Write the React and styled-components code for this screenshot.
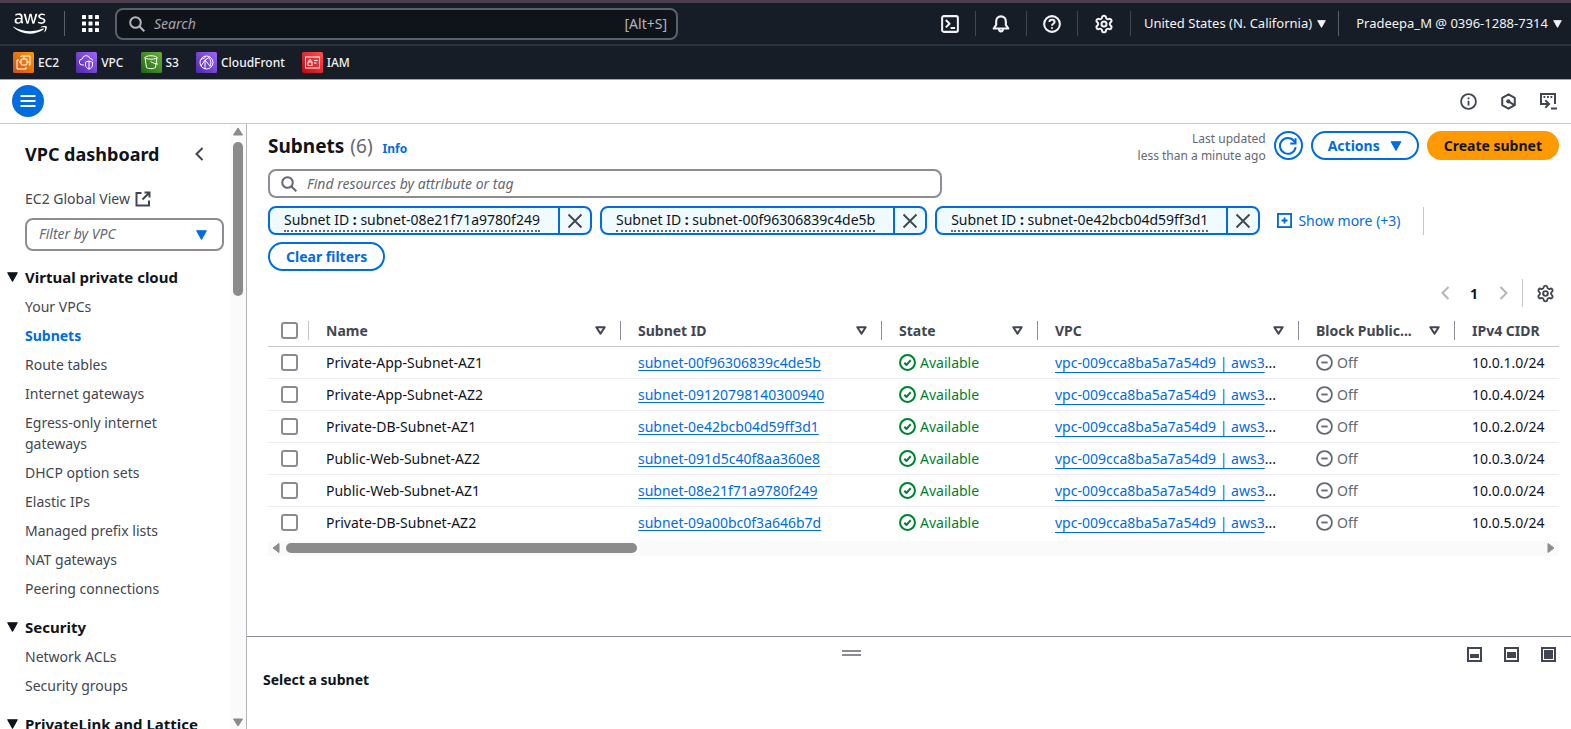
import React, { useState } from "react";
import styled, { createGlobalStyle } from "styled-components";
import { FaAws } from "react-icons/fa";
import { Settings } from "lucide-react";

const GlobalStyle = createGlobalStyle`
  *,
  *::before {
    box-sizing: border-box;
  }

  body {
    margin: 0;
    background: #fff;
    color: #0f141a;
    font-family: "Noto Sans", "Open Sans", sans-serif;
    font-size: 14px;
    line-height: 21px;
  }

  button,
  input,
  select {
    margin: 0;
    font: inherit;
    color: inherit;
  }

  svg {
    display: block;
    flex: none;
  }
`;

const Page = styled.div`
  display: flex;
  flex-direction: column;
  height: 100vh;
  overflow: hidden;
`;

/* ---------- top navigation ---------- */

const Nav = styled.header`
  flex: none;
  background: #161d26;
  border-top: 3px solid #4b3f4e;
  border-bottom: 1px solid #a4a8b3;
  color: #f3f3f7;
`;

const NavRow = styled.div`
  display: flex;
  align-items: center;
  height: 43px;
  padding: 0 0 0 13px;
  border-bottom: 2px solid #2c323d;
`;

const Logo = styled.a`
  display: flex;
  padding-right: 17px;
  color: #fff;

  svg {
    width: 34px;
    height: 27px;
  }
`;

const Divider = styled.span`
  width: 1px;
  height: ${(p) => p.$h || 25}px;
  margin-right: ${(p) => p.$gap || 0}px;
  background: ${(p) => p.$color || "#424650"};
  flex: none;
`;

const IconButton = styled.button`
  display: flex;
  align-items: center;
  justify-content: center;
  width: ${(p) => p.$w || 50}px;
  padding: 0;
  border: 0;
  background: none;
  cursor: pointer;
`;

const NavSearch = styled.label`
  display: flex;
  align-items: center;
  flex: 0 1 563px;
  height: 32px;
  padding: 0 9px 0 12px;
  gap: 9px;
  border: 2px solid #5c606a;
  border-radius: 8px;
  background: #0f141a;
  color: #b4b4bb;

  input {
    flex: 1;
    min-width: 0;
    padding: 0;
    border: 0;
    outline: 0;
    background: none;
  }

  input::placeholder {
    color: #a4a4ad;
    font-style: italic;
  }
`;

const NavRight = styled.div`
  display: flex;
  align-items: center;
  margin-left: auto;
`;

const NavMenu = styled.button`
  display: flex;
  align-items: center;
  gap: 5px;
  padding: 0 ${(p) => p.$end}px 0 ${(p) => p.$start}px;
  border: 0;
  background: none;
  font-size: 13px;
  white-space: nowrap;
  cursor: pointer;
`;

const Favorites = styled.nav`
  display: flex;
  align-items: center;
  gap: 17px;
  height: 33px;
  padding: 0 13px;
`;

const Favorite = styled.a`
  display: flex;
  align-items: center;
  gap: 4px;
  color: #f3f3f7;
  font-size: 12px;
  font-weight: 500;
  text-decoration: none;
`;

/* ---------- toolbar ---------- */

const Toolbar = styled.div`
  display: flex;
  align-items: center;
  justify-content: space-between;
  flex: none;
  height: 44px;
  padding: 0 3px 1px 12px;
  border-bottom: 1px solid #c6c6cd;
  color: #424650;
`;

const MenuToggle = styled.button`
  display: flex;
  align-items: center;
  justify-content: center;
  width: 32px;
  height: 32px;
  border: 0;
  border-radius: 50%;
  background: #006ce0;
  color: #fff;
  cursor: pointer;
`;

const ToolIcons = styled.div`
  display: flex;
`;

const Body = styled.div`
  display: flex;
  flex: 1;
  min-height: 0;
`;

/* ---------- sidebar ---------- */

const Sidebar = styled.aside`
  display: flex;
  flex: none;
  width: 247px;
  border-right: 1px solid #b4b4bb;
`;

const SideContent = styled.div`
  flex: 1;
  min-width: 0;
  overflow: hidden;
  padding: 17px 6px 0 7px;
`;

const SideHeader = styled.div`
  display: flex;
  align-items: center;
  justify-content: space-between;
  padding: 0 18px;
  margin-bottom: 21px;
`;

const SideTitle = styled.h2`
  margin: 0;
  font-size: 18px;
  line-height: 26px;
`;

const SideTop = styled.div`
  display: flex;
  flex-direction: column;
  gap: 9px;
  padding-left: 18px;
  margin-bottom: 15px;
`;

const SideLink = styled.a`
  display: flex;
  align-items: center;
  gap: 5px;
  color: ${(p) => (p.$active ? "#006ce0" : "#424650")};
  font-weight: ${(p) => (p.$active ? 700 : 400)};
  text-decoration: none;
`;

const SelectBox = styled.div`
  position: relative;

  select {
    appearance: none;
    width: 100%;
    height: 33px;
    padding: 0 12px 2px;
    border: 2px solid #8c8c94;
    border-radius: 8px;
    background: #fff;
    color: #656871;
    font-style: italic;
  }

  svg {
    position: absolute;
    right: 17px;
    top: 12px;
    color: #006ce0;
    pointer-events: none;
  }
`;

const Section = styled.section`
  margin-bottom: 17px;
`;

const SectionButton = styled.button`
  display: flex;
  align-items: center;
  gap: 7px;
  padding: 0;
  border: 0;
  background: none;
  font-size: 15px;
  font-weight: 700;
  line-height: 22px;
  white-space: nowrap;
  cursor: pointer;
`;

const LinkList = styled.ul`
  display: flex;
  flex-direction: column;
  gap: 8px;
  margin: 8px 0 0;
  padding: 0 40px 0 18px;
  list-style: none;
`;

const Scrollbar = styled.div`
  display: flex;
  flex: none;
  flex-direction: ${(p) => (p.$horizontal ? "row" : "column")};
  align-items: center;
  justify-content: space-between;
  gap: 6px;
  padding: ${(p) => (p.$horizontal ? "0 4px" : "3px 0 2px")};
  ${(p) => (p.$horizontal ? "height: 15px" : "width: 16px")};
  background: #fafafa;
  color: #8b8b8b;
`;

const Track = styled.div`
  flex: 1;
  display: flex;
  flex-direction: ${(p) => (p.$horizontal ? "row" : "column")};
`;

const Thumb = styled.div`
  width: ${(p) => p.$w};
  height: ${(p) => p.$h};
  border-radius: 5px;
  background: #8b8b8b;
`;

/* ---------- main ---------- */

const Main = styled.main`
  display: flex;
  flex: 1;
  flex-direction: column;
  min-width: 0;
`;

const Content = styled.div`
  flex: 1;
  min-height: 0;
  overflow: hidden;
  padding: 7px 12px 0 21px;
`;

const TitleRow = styled.div`
  display: flex;
  align-items: center;
  justify-content: space-between;
  height: 29px;
  margin-bottom: 9px;
`;

const Title = styled.h1`
  display: flex;
  align-items: baseline;
  gap: 6px;
  margin: 0;
  padding-top: 3px;
  font-size: 19px;
  line-height: 28px;

  span {
    color: #656871;
    font-weight: 400;
  }

  a {
    margin-left: 4px;
    color: #006ce0;
    font-size: 12px;
    text-decoration: none;
  }
`;

const Actions = styled.div`
  display: flex;
  align-items: center;
  gap: 8px;
`;

const Updated = styled.p`
  margin: 0;
  padding-top: 3px;
  color: #656871;
  font-size: 12px;
  line-height: 17px;
  text-align: right;
`;

const Button = styled.button`
  display: inline-flex;
  align-items: center;
  justify-content: center;
  gap: 10px;
  height: 29px;
  padding: 0 ${(p) => p.$pad ?? 15}px;
  ${(p) => p.$round && "width: 29px;"}
  border: 2px solid ${(p) => (p.$primary ? "#ff9900" : "#006ce0")};
  border-radius: 15px;
  background: ${(p) => (p.$primary ? "#ff9900" : "#fff")};
  color: ${(p) => (p.$primary ? "#0f141a" : "#006ce0")};
  font-weight: 700;
  cursor: pointer;
`;

const FilterInput = styled.label`
  display: flex;
  align-items: center;
  gap: 10px;
  width: 674px;
  max-width: 100%;
  height: 29px;
  padding: 0 11px;
  margin-bottom: 8px;
  border: 2px solid #8c8c94;
  border-radius: 8px;
  color: #656871;

  input {
    flex: 1;
    padding: 0;
    border: 0;
    outline: 0;
    background: none;
  }

  input::placeholder {
    color: #656871;
    font-style: italic;
  }
`;

const Tokens = styled.div`
  display: flex;
  align-items: center;
  gap: 8px;
  margin-bottom: 7px;
`;

const Token = styled.div`
  display: flex;
  height: 29px;
  border: 2px solid #006ce0;
  border-radius: 8px;
  background: #f0fbff;
  overflow: hidden;

  button {
    display: flex;
    align-items: center;
    border: 0;
    background: none;
    cursor: pointer;
  }
`;

const TokenLabel = styled.button`
  padding: 0 18px 0 14px;
  white-space: nowrap;

  span {
    line-height: 20px;
    border-bottom: 2px dotted #656871;
  }
`;

const TokenClose = styled.button`
  padding: 0 7px;
  color: #424650;

  && {
    border-left: 2px solid #006ce0;
  }
`;

const ShowMore = styled.button`
  display: flex;
  align-items: center;
  gap: 6px;
  padding: 0 14px 0 9px;
  border: 0;
  background: none;
  color: #006ce0;
  cursor: pointer;
`;

const Pagination = styled.div`
  display: flex;
  align-items: center;
  justify-content: flex-end;
  height: 28px;
  margin: 8px 0;
  color: #424650;

  b {
    width: 20px;
    text-align: center;
    color: #0f141a;
  }
`;

const Table = styled.table`
  width: 100%;
  table-layout: fixed;
  border-collapse: collapse;
  margin-bottom: 2px;

  th,
  td {
    height: 32px;
    padding: 0 0 0 17px;
    border-bottom: 1px solid #ebebf0;
    text-align: left;
    white-space: nowrap;
  }

  th {
    height: 31px;
    border-color: #c6c6cd;
    color: #424650;
  }

  tbody tr:last-child td {
    border-color: transparent;
  }

  th:first-child,
  td:first-child {
    padding-left: 13px;
  }
`;

const Checkbox = styled.input`
  display: block;
  appearance: none;
  width: 17px;
  height: 17px;
  border: 2px solid #8c8c94;
  border-radius: 3px;
  background: #fff;

  &:checked {
    border-color: #006ce0;
    background: #006ce0;
  }
`;

const HeadCell = styled.div`
  display: flex;
  align-items: center;
  justify-content: space-between;
`;

const HeadEnd = styled.span`
  display: flex;
  align-items: center;
  gap: 14px;
`;

const IdLink = styled.a`
  color: #006ce0;
  text-underline-offset: 2px;
`;

const VpcLink = styled.a`
  color: #006ce0;
  text-underline-offset: 4px;
`;

const Status = styled.span`
  display: flex;
  align-items: center;
  gap: 4px;
  color: ${(p) => (p.$ok ? "#00802f" : "#656871")};
`;

const SplitPanel = styled.section`
  display: flex;
  flex-direction: column;
  flex: none;
  height: 93px;
  border-top: 1px solid #8c8c94;
`;

const SplitBar = styled.div`
  display: flex;
  align-items: center;
  height: 32px;
  padding: 2px 4px 0 0;
  color: #424650;
`;

const Handle = styled.span`
  display: flex;
  justify-content: center;
  flex: 1;

  &::before {
    content: "";
    width: 19px;
    height: 6px;
    margin-bottom: 3px;
    border-top: 2px solid #8c8c94;
    border-bottom: 2px solid #8c8c94;
  }
`;

const PanelIcons = styled.div`
  display: flex;
`;

const PanelTitle = styled.h2`
  margin: 0;
  padding: 0 16px;
  font-size: 14px;
  line-height: 21px;
`;

/* ---------- icons ---------- */

const Icon = ({ size = 16, sw = 2, children }) => (
  <svg
    width={size}
    height={size}
    viewBox="0 0 16 16"
    fill="none"
    stroke="currentColor"
    strokeWidth={sw}
    strokeLinejoin="round"
    aria-hidden="true"
  >
    {children}
  </svg>
);

const Caret = ({ w = 10, h = 9 }) => (
  <svg width={w} height={h} viewBox="0 0 10 9" fill="currentColor" stroke="currentColor" strokeLinejoin="round">
    <path d="M.7.7h8.6L5 8.3z" />
  </svg>
);

const SortIcon = () => (
  <svg width="11" height="9" viewBox="0 0 11 9" fill="none" stroke="currentColor" strokeWidth="2" strokeLinejoin="round">
    <path d="M1.300 1.300h8.400L5.500 7.600z" />
  </svg>
);

const SearchIcon = ({ size = 16 }) => (
  <Icon size={size}>
    <circle cx="6.500" cy="6.500" r="5.300" />
    <path d="m10.300 10.300 5 5" />
  </Icon>
);

const AppsIcon = () => (
  <svg width="17" height="17" viewBox="0 0 17 17" fill="#fff">
    {[0, 6.5, 13].map((y) =>
      [0, 6.5, 13].map((x) => <rect key={`${x}-${y}`} x={x} y={y} width="4" height="4" rx=".6" />)
    )}
  </svg>
);

const TerminalIcon = () => (
  <Icon size={18} sw={1.8}>
    <rect x="1" y="1" width="14" height="14" rx="1.500" />
    <path d="m4.300 4.500 3.300 3.300L4.300 11M8.500 11.500h4" />
  </Icon>
);

const BellIcon = () => (
  <Icon size={18} sw={1.9}>
    <path d="M1.500 12h13l-2.200-3.200V5.700C12.300 3 10.500 1.200 8 1.200S3.700 3 3.700 5.700v3.100z" />
    <path d="M6.300 12.500c0 1.300.7 2.100 1.700 2.100s1.700-.8 1.700-2.100" />
  </Icon>
);

const HelpIcon = () => (
  <Icon size={18} sw={1.8}>
    <circle cx="8" cy="8" r="7" />
    <path d="M5.700 6.300C5.700 5 6.700 4.200 8 4.200s2.300.8 2.300 2c0 1.600-2.300 1.600-2.300 3.300M8 10.800v1.500" />
  </Icon>
);

const InfoIcon = () => (
  <Icon size={17} sw={1.7}>
    <circle cx="8" cy="8" r="7" />
    <path d="M8 7.200v4.500M8 4.200v1.700" />
  </Icon>
);

const HexIcon = () => (
  <Icon size={17} sw={1.9}>
    <path d="M8 1.200 13.900 4.500v7L8 14.800 2.100 11.500v-7z" />
    <circle cx="7.800" cy="7.800" r="2" fill="currentColor" stroke="none" />
    <path d="m7.800 7.800 5.800 3.600" />
  </Icon>
);

const ShellIcon = () => (
  <svg width="18" height="18" viewBox="0 0 18 18" fill="none" stroke="currentColor" strokeWidth="2">
    <path d="M2 11V2h14v10" />
    <path d="M4.500 5h1.800M8 5h1.800M11.500 5h1.800" />
    <path d="M2 8v4h7M6.300 8.300 10 12l-3.700 3.700M12 16.500h6" />
  </svg>
);

const ExternalIcon = () => (
  <Icon size={16}>
    <path d="M6.500 2H1.500v12.500H14V9.500M9.500 1.500h5v5M14.500 1.500 7.500 8.500" strokeLinejoin="miter" />
  </Icon>
);

const CheckIcon = () => (
  <Icon size={17} sw={1.9}>
    <circle cx="8" cy="8" r="7" />
    <path d="m5 8.200 2.100 2.100L11 5.700" />
  </Icon>
);

const OffIcon = () => (
  <Icon size={17} sw={1.7}>
    <circle cx="8" cy="8" r="7" />
    <path d="M5 8h6" />
  </Icon>
);

const Chevron = ({ dir, color }) => (
  <svg width="9" height="14" viewBox="0 0 9 14" fill="none" stroke={color || "currentColor"} strokeWidth="2">
    <path d={dir === "left" ? "M7.500 1 1.500 7l6 6" : "m1.500 1 6 6-6 6"} />
  </svg>
);

const CloseIcon = () => (
  <Icon size={16} sw={1.9}>
    <path d="m1.500 1.500 13 13M14.500 1.500l-13 13" />
  </Icon>
);

const RefreshIcon = () => (
  <Icon size={18} sw={1.8}>
    <path d="M14.800 9A7 7 0 1 1 13.300 3.500L14.500 5.200" />
    <path d="M14.700 1v4.700H10" strokeLinejoin="miter" />
  </Icon>
);

const PlusBoxIcon = () => (
  <Icon size={15}>
    <rect x="1" y="1" width="14" height="14" strokeLinejoin="miter" />
    <path d="M8 4.800v6.400M4.800 8h6.400" />
  </Icon>
);

const PanelIcon = ({ x, y, w, h }) => (
  <svg width="15" height="15" viewBox="0 0 15 15" fill="none" stroke="currentColor" strokeWidth="2">
    <rect x="1" y="1" width="13" height="13" />
    <rect x={x} y={y} width={w} height={h} fill="currentColor" stroke="none" />
  </svg>
);

const ScrollArrow = ({ dir }) => {
  const paths = {
    up: "M5 1 9.500 8h-9z",
    down: "M5 8 .5 1h9z",
    left: "M1 5l6-4.500v9z",
    right: "M7 5 1 .5v9z",
  };
  const side = dir === "left" || dir === "right";
  return (
    <svg width={side ? 8 : 10} height={side ? 10 : 9} fill="currentColor" stroke="currentColor" strokeLinejoin="round">
      <path d={paths[dir]} />
    </svg>
  );
};

const glyphs = {
  EC2: (
    <>
      <rect x="8" y="7" width="6" height="6" rx="1" />
      <path d="M8 5V4h9v9h-1M6 8H4v9h9v-2M11 4v3M14 10h3M8 10H6" />
    </>
  ),
  VPC: (
    <>
      <path d="M8 13H6.500a3 3 0 0 1-.3-6A4 4 0 0 1 14 6.500c1.600 0 2.500 1 2.500 2" />
      <path d="m13 9 3.500 1.200V13c0 2-1.500 3.300-3.500 4.200-2-.9-3.500-2.200-3.500-4.200v-2.800zM13 9v8" />
    </>
  ),
  S3: (
    <>
      <ellipse cx="10" cy="5.500" rx="6" ry="1.700" />
      <path d="m4 5.500 1.500 10c1.500 1.600 7.500 1.600 9 0l1.500-10M9.500 9.500c2.500 1.500 5 2.500 7.500 2.500" />
    </>
  ),
  CloudFront: (
    <>
      <circle cx="10.500" cy="10.500" r="6.500" />
      <path d="M5 7c3 0 4-1 5-3M9 8l4-2.500M9 8l-4 6M9 8l5 6M13 5.500c2 3 2.500 6 1 9M9 8v9" />
    </>
  ),
  IAM: (
    <>
      <rect x="3.500" y="5" width="14" height="11" />
      <rect x="6" y="10" width="4" height="3.500" />
      <path d="M7 10V8.500a1 1 0 0 1 2 0V10M12 8.500h3.500M12 11h2.500" />
    </>
  ),
};

const ServiceIcon = ({ name, from, to }) => (
  <svg width="21" height="21" viewBox="0 0 21 21" fill="none" stroke="#fff" aria-hidden="true">
    <defs>
      <linearGradient id={`g-${name}`} x1="0" y1="1" x2="1" y2="0">
        <stop offset="0" stopColor={from} />
        <stop offset="1" stopColor={to} />
      </linearGradient>
    </defs>
    <rect width="21" height="21" rx="1.500" fill={`url(#g-${name})`} stroke="none" />
    {glyphs[name]}
  </svg>
);

/* ---------- data ---------- */

const favorites = [
  { name: "EC2", from: "#c8511b", to: "#ff9900" },
  { name: "VPC", from: "#4d27a8", to: "#a166ff" },
  { name: "S3", from: "#1b660f", to: "#6cae3e" },
  { name: "CloudFront", from: "#4d27a8", to: "#a166ff" },
  { name: "IAM", from: "#bd0816", to: "#ff5252" },
];

const sections = [
  {
    title: "Virtual private cloud",
    links: [
      "Your VPCs",
      "Subnets",
      "Route tables",
      "Internet gateways",
      "Egress-only internet gateways",
      "DHCP option sets",
      "Elastic IPs",
      "Managed prefix lists",
      "NAT gateways",
      "Peering connections",
    ],
  },
  { title: "Security", links: ["Network ACLs", "Security groups"] },
  { title: "PrivateLink and Lattice", links: [] },
];

const filters = ["subnet-08e21f71a9780f249", "subnet-00f96306839c4de5b", "subnet-0e42bcb04d59ff3d1"];

const columns = [
  { label: "Name", width: 312 },
  { label: "Subnet ID", width: 261 },
  { label: "State", width: 156 },
  { label: "VPC", width: 261 },
  { label: "Block Public...", width: 156 },
];

const subnets = [
  { name: "Private-App-Subnet-AZ1", id: "subnet-00f96306839c4de5b", cidr: "10.0.1.0/24" },
  { name: "Private-App-Subnet-AZ2", id: "subnet-09120798140300940", cidr: "10.0.4.0/24" },
  { name: "Private-DB-Subnet-AZ1", id: "subnet-0e42bcb04d59ff3d1", cidr: "10.0.2.0/24" },
  { name: "Public-Web-Subnet-AZ2", id: "subnet-091d5c40f8aa360e8", cidr: "10.0.3.0/24" },
  { name: "Public-Web-Subnet-AZ1", id: "subnet-08e21f71a9780f249", cidr: "10.0.0.0/24" },
  { name: "Private-DB-Subnet-AZ2", id: "subnet-09a00bc0f3a646b7d", cidr: "10.0.5.0/24" },
];

function TopNav() {
  return (
    <Nav>
      <NavRow>
        <Logo href="#" aria-label="AWS">
          <FaAws />
        </Logo>
        <Divider $color="#5c606a" />
        <IconButton aria-label="Services">
          <AppsIcon />
        </IconButton>
        <NavSearch>
          <SearchIcon />
          <input type="search" placeholder="Search" aria-label="Search" />
          <span>[Alt+S]</span>
        </NavSearch>
        <NavRight>
          <IconButton aria-label="CloudShell">
            <TerminalIcon />
          </IconButton>
          <Divider />
          <IconButton aria-label="Notifications">
            <BellIcon />
          </IconButton>
          <Divider />
          <IconButton aria-label="Help">
            <HelpIcon />
          </IconButton>
          <Divider />
          <IconButton $w={52} aria-label="Settings">
            <Settings size={20} strokeWidth={2.4} />
          </IconButton>
          <Divider />
          <NavMenu $start={13} $end={12}>
            United States (N. California) <Caret w={9} h={8} />
          </NavMenu>
          <Divider $color="#5c606a" />
          <NavMenu $start={17} $end={9}>
            Pradeepa_M @ 0396-1288-7314 <Caret w={9} h={8} />
          </NavMenu>
        </NavRight>
      </NavRow>
      <Favorites>
        {favorites.map((f) => (
          <Favorite key={f.name} href="#">
            <ServiceIcon {...f} />
            {f.name}
          </Favorite>
        ))}
      </Favorites>
    </Nav>
  );
}

function SideNav() {
  return (
    <Sidebar>
      <SideContent>
        <SideHeader>
          <SideTitle>VPC dashboard</SideTitle>
          <IconButton $w={14} aria-label="Close navigation">
            <Chevron dir="left" color="#424650" />
          </IconButton>
        </SideHeader>
        <SideTop>
          <SideLink href="#">
            EC2 Global View <ExternalIcon />
          </SideLink>
          <SelectBox>
            <select aria-label="Filter by VPC">
              <option>Filter by VPC</option>
            </select>
            <Caret w={11} h={10} />
          </SelectBox>
        </SideTop>
        {sections.map((s) => (
          <Section key={s.title}>
            <SectionButton>
              <Caret w={11} h={10} /> {s.title}
            </SectionButton>
            <LinkList>
              {s.links.map((l) => (
                <li key={l}>
                  <SideLink href="#" $active={l === "Subnets"}>
                    {l}
                  </SideLink>
                </li>
              ))}
            </LinkList>
          </Section>
        ))}
      </SideContent>
      <Scrollbar>
        <ScrollArrow dir="up" />
        <Track>
          <Thumb $w="10px" $h="154px" />
        </Track>
        <ScrollArrow dir="down" />
      </Scrollbar>
    </Sidebar>
  );
}

function SubnetTable() {
  const [selected, setSelected] = useState([]);

  const toggle = (id) => {
    setSelected((prev) => (prev.includes(id) ? prev.filter((s) => s !== id) : [...prev, id]));
  };

  return (
    <Table>
      <colgroup>
        <col width={41} />
        {columns.map((c) => (
          <col key={c.label} width={c.width} />
        ))}
        <col />
      </colgroup>
      <thead>
        <tr>
          <th>
            <HeadCell>
              <Checkbox
                type="checkbox"
                aria-label="Select all subnets"
                checked={selected.length === subnets.length}
                onChange={(e) => setSelected(e.target.checked ? subnets.map((s) => s.id) : [])}
              />
              <Divider $h={19} $color="#c6c6cd" />
            </HeadCell>
          </th>
          {columns.map((c) => (
            <th key={c.label}>
              <HeadCell>
                {c.label}
                <HeadEnd>
                  <SortIcon />
                  <Divider $h={19} $color="#8c8c94" />
                </HeadEnd>
              </HeadCell>
            </th>
          ))}
          <th>IPv4 CIDR</th>
        </tr>
      </thead>
      <tbody>
        {subnets.map((s) => (
          <tr key={s.id}>
            <td>
              <Checkbox
                type="checkbox"
                aria-label={`Select ${s.name}`}
                checked={selected.includes(s.id)}
                onChange={() => toggle(s.id)}
              />
            </td>
            <td>{s.name}</td>
            <td>
              <IdLink href="#">{s.id}</IdLink>
            </td>
            <td>
              <Status $ok>
                <CheckIcon /> Available
              </Status>
            </td>
            <td>
              <VpcLink href="#">vpc-009cca8ba5a7a54d9 | aws3</VpcLink>...
            </td>
            <td>
              <Status>
                <OffIcon /> Off
              </Status>
            </td>
            <td>{s.cidr}</td>
          </tr>
        ))}
      </tbody>
    </Table>
  );
}

export default function App() {
  return (
    <Page>
      <GlobalStyle />
      <TopNav />
      <Toolbar>
        <MenuToggle aria-label="Toggle navigation">
          <Icon size={16}>
            <path d="M.5 3h15M.5 8h15M.5 13h15" />
          </Icon>
        </MenuToggle>
        <ToolIcons>
          <IconButton $w={40} aria-label="Info">
            <InfoIcon />
          </IconButton>
          <IconButton $w={40} aria-label="Amazon Q">
            <HexIcon />
          </IconButton>
          <IconButton $w={40} aria-label="Console to code">
            <ShellIcon />
          </IconButton>
        </ToolIcons>
      </Toolbar>
      <Body>
        <SideNav />
        <Main>
          <Content>
            <TitleRow>
              <Title>
                Subnets <span>(6)</span> <a href="#">Info</a>
              </Title>
              <Actions>
                <Updated>
                  Last updated
                  <br />
                  less than a minute ago
                </Updated>
                <Button $round $pad={0} aria-label="Refresh">
                  <RefreshIcon />
                </Button>
                <Button>
                  Actions <Caret w={12} h={10} />
                </Button>
                <Button $primary>Create subnet</Button>
              </Actions>
            </TitleRow>
            <FilterInput>
              <SearchIcon />
              <input placeholder="Find resources by attribute or tag" aria-label="Find resources" />
            </FilterInput>
            <Tokens>
              {filters.map((f) => (
                <Token key={f}>
                  <TokenLabel>
                    <span>
                      Subnet ID <b>:</b> {f}
                    </span>
                  </TokenLabel>
                  <TokenClose aria-label={`Remove ${f}`}>
                    <CloseIcon />
                  </TokenClose>
                </Token>
              ))}
              <ShowMore>
                <PlusBoxIcon /> Show more (+3)
              </ShowMore>
              <Divider $h={28} $color="#c6c6cd" />
            </Tokens>
            <Button $pad={16}>Clear filters</Button>
            <Pagination>
              <IconButton $w={38} aria-label="Previous page">
                <Chevron dir="left" color="#b4b4bb" />
              </IconButton>
              <b>1</b>
              <IconButton $w={38} aria-label="Next page">
                <Chevron dir="right" color="#b4b4bb" />
              </IconButton>
              <Divider $h={28} $gap={8} $color="#c6c6cd" />
              <IconButton $w={28} aria-label="Preferences">
                <Settings size={19} strokeWidth={2.4} />
              </IconButton>
            </Pagination>
            <SubnetTable />
            <Scrollbar $horizontal>
              <ScrollArrow dir="left" />
              <Track $horizontal>
                <Thumb $w="28%" $h="10px" />
              </Track>
              <ScrollArrow dir="right" />
            </Scrollbar>
          </Content>
          <SplitPanel>
            <SplitBar>
              <Handle />
              <PanelIcons>
                <IconButton $w={37} aria-label="Small panel">
                  <PanelIcon x={3} y={7} w={9} h={4} />
                </IconButton>
                <IconButton $w={37} aria-label="Medium panel">
                  <PanelIcon x={3} y={5} w={9} h={6} />
                </IconButton>
                <IconButton $w={37} aria-label="Full panel">
                  <PanelIcon x={3} y={3} w={9} h={9} />
                </IconButton>
              </PanelIcons>
            </SplitBar>
            <PanelTitle>Select a subnet</PanelTitle>
          </SplitPanel>
        </Main>
      </Body>
    </Page>
  );
}
